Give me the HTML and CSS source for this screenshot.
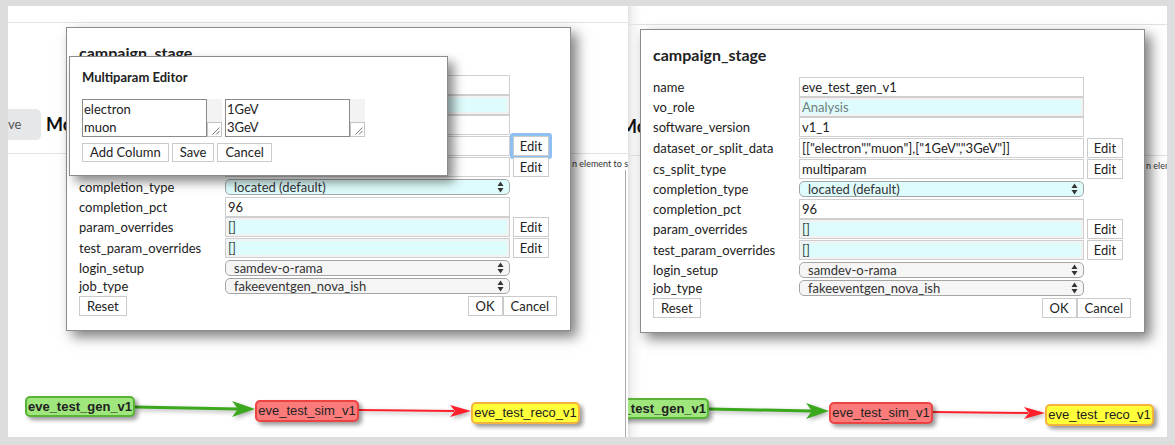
FILE: index.html
```html
<!DOCTYPE html>
<html lang="en">
<head>
<meta charset="utf-8">
<title>campaign_stage editor</title>
<link rel="stylesheet" href="styles.css">
</head>
<body>
<div class="screens">

  <section class="shot shot-left">
    <div class="page">
      <div class="topbar"></div>
      <div class="toolbar">
        <button class="tb-btn">ve</button>
        <h2 class="page-title">Mo</h2>
      </div>
      <div class="hint">n element to s</div>
      <div class="canvas">
        <svg class="edges" width="618" height="267" viewBox="0 0 618 267">
          <line x1="127" y1="237" x2="230" y2="239" stroke="#3ca81e" stroke-width="3"/>
          <path d="M247 239 L224 231 L230 239 L224 247 Z" fill="#3ca81e"/>
          <line x1="351" y1="240" x2="446" y2="241" stroke="#ff1f2a" stroke-width="2"/>
          <path d="M463 241 L442 235 L447 241 L442 247 Z" fill="#ff1f2a"/>
        </svg>
        <div class="node node-gen">eve_test_gen_v1</div>
        <div class="node node-sim">eve_test_sim_v1</div>
        <div class="node node-reco">eve_test_reco_v1</div>
      </div>

      <div class="dialog">
        <h3 class="dialog-title">campaign_stage</h3>
        <div class="form-row r20"><span class="label">name</span><input class="field" type="text" value="eve_test_gen_v1"></div>
        <div class="form-row r20"><span class="label">vo_role</span><input class="field field-ro field-muted" type="text" value="Analysis"></div>
        <div class="form-row r20"><span class="label">software_version</span><input class="field" type="text" value="v1_1"></div>
        <div class="form-row r21"><span class="label">dataset_or_split_data</span><input class="field" type="text" value=""><button class="btn btn-edit is-focused">Edit</button></div>
        <div class="form-row r21"><span class="label">cs_split_type</span><input class="field" type="text" value="multiparam"><button class="btn btn-edit">Edit</button></div>
        <div class="form-row r19"><span class="label">completion_type</span><div class="select select-ro"><span>located (default)</span><svg class="sel-arrow" width="7" height="12" viewBox="0 0 7 12"><path d="M3.5 0.5 L6.5 5 H0.5Z M3.5 11.5 L6.5 7 H0.5Z" fill="#333"/></svg></div></div>
        <div class="form-row r21"><span class="label">completion_pct</span><input class="field" type="text" value="96"></div>
        <div class="form-row r20"><span class="label">param_overrides</span><input class="field field-ro" type="text" value="[]"><button class="btn btn-edit">Edit</button></div>
        <div class="form-row r21"><span class="label">test_param_overrides</span><input class="field field-ro" type="text" value="[]"><button class="btn btn-edit">Edit</button></div>
        <div class="form-row r19"><span class="label">login_setup</span><div class="select"><span>samdev-o-rama</span><svg class="sel-arrow" width="7" height="12" viewBox="0 0 7 12"><path d="M3.5 0.5 L6.5 5 H0.5Z M3.5 11.5 L6.5 7 H0.5Z" fill="#333"/></svg></div></div>
        <div class="form-row r18"><span class="label">job_type</span><div class="select"><span>fakeeventgen_nova_ish</span><svg class="sel-arrow" width="7" height="12" viewBox="0 0 7 12"><path d="M3.5 0.5 L6.5 5 H0.5Z M3.5 11.5 L6.5 7 H0.5Z" fill="#333"/></svg></div></div>
        <div class="form-actions">
          <button class="btn">Reset</button>
          <div class="action-group"><button class="btn">OK</button><button class="btn">Cancel</button></div>
        </div>
      </div>

      <div class="mp">
        <h4 class="mp-title">Multiparam Editor</h4>
        <div class="mp-cols">
          <div class="ta">
            <div class="ta-text">electron<br>muon</div>
            <div class="ta-track"><div class="ta-grip"><svg width="13" height="13" viewBox="0 0 13 13"><path d="M11.5 4.5 L4.5 11.5 M11.5 8 L8 11.5" stroke="#777" stroke-width="1"/></svg></div></div>
          </div>
          <div class="ta">
            <div class="ta-text">1GeV<br>3GeV</div>
            <div class="ta-track"><div class="ta-grip"><svg width="13" height="13" viewBox="0 0 13 13"><path d="M11.5 4.5 L4.5 11.5 M11.5 8 L8 11.5" stroke="#777" stroke-width="1"/></svg></div></div>
          </div>
        </div>
        <div class="mp-actions">
          <button class="btn btn-sm">Add Column</button>
          <button class="btn btn-sm">Save</button>
          <button class="btn btn-sm">Cancel</button>
        </div>
      </div>
    </div>
  </section>

  <section class="shot shot-right">
    <div class="page">
      <div class="topbar"></div>
      <div class="toolbar">
        <button class="tb-btn">ve</button>
        <h2 class="page-title">Mo</h2>
      </div>
      <div class="hint">n element to s</div>
      <div class="canvas">
        <svg class="edges" width="618" height="267" viewBox="0 0 618 267">
          <line x1="127" y1="237" x2="230" y2="239" stroke="#3ca81e" stroke-width="3"/>
          <path d="M247 239 L224 231 L230 239 L224 247 Z" fill="#3ca81e"/>
          <line x1="351" y1="240" x2="446" y2="241" stroke="#ff1f2a" stroke-width="2"/>
          <path d="M463 241 L442 235 L447 241 L442 247 Z" fill="#ff1f2a"/>
        </svg>
        <div class="node node-gen">eve_test_gen_v1</div>
        <div class="node node-sim">eve_test_sim_v1</div>
        <div class="node node-reco">eve_test_reco_v1</div>
      </div>

      <div class="dialog">
        <h3 class="dialog-title">campaign_stage</h3>
        <div class="form-row r20"><span class="label">name</span><input class="field" type="text" value="eve_test_gen_v1"></div>
        <div class="form-row r20"><span class="label">vo_role</span><input class="field field-ro field-muted" type="text" value="Analysis"></div>
        <div class="form-row r20"><span class="label">software_version</span><input class="field" type="text" value="v1_1"></div>
        <div class="form-row r21"><span class="label">dataset_or_split_data</span><input class="field" type="text" value='[["electron","muon"],["1GeV","3GeV"]]'><button class="btn btn-edit">Edit</button></div>
        <div class="form-row r21"><span class="label">cs_split_type</span><input class="field" type="text" value="multiparam"><button class="btn btn-edit">Edit</button></div>
        <div class="form-row r19"><span class="label">completion_type</span><div class="select select-ro"><span>located (default)</span><svg class="sel-arrow" width="7" height="12" viewBox="0 0 7 12"><path d="M3.5 0.5 L6.5 5 H0.5Z M3.5 11.5 L6.5 7 H0.5Z" fill="#333"/></svg></div></div>
        <div class="form-row r21"><span class="label">completion_pct</span><input class="field" type="text" value="96"></div>
        <div class="form-row r20"><span class="label">param_overrides</span><input class="field field-ro" type="text" value="[]"><button class="btn btn-edit">Edit</button></div>
        <div class="form-row r21"><span class="label">test_param_overrides</span><input class="field field-ro" type="text" value="[]"><button class="btn btn-edit">Edit</button></div>
        <div class="form-row r19"><span class="label">login_setup</span><div class="select"><span>samdev-o-rama</span><svg class="sel-arrow" width="7" height="12" viewBox="0 0 7 12"><path d="M3.5 0.5 L6.5 5 H0.5Z M3.5 11.5 L6.5 7 H0.5Z" fill="#333"/></svg></div></div>
        <div class="form-row r18"><span class="label">job_type</span><div class="select"><span>fakeeventgen_nova_ish</span><svg class="sel-arrow" width="7" height="12" viewBox="0 0 7 12"><path d="M3.5 0.5 L6.5 5 H0.5Z M3.5 11.5 L6.5 7 H0.5Z" fill="#333"/></svg></div></div>
        <div class="form-actions">
          <button class="btn">Reset</button>
          <div class="action-group"><button class="btn">OK</button><button class="btn">Cancel</button></div>
        </div>
      </div>
    </div>
  </section>

</div>
</body>
</html>
```

FILE: styles.css
```css
* { box-sizing: border-box; }

html, body { margin: 0; padding: 0; }

body {
  width: 1175px;
  height: 445px;
  overflow: hidden;
  background: #dddddd;
  font-family: Lato, "Open Sans", sans-serif;
  color: #222;
}

.screens {
  display: flex;
  padding: 6px 0 0 8px;
}

.shot {
  position: relative;
  height: 431px;
  overflow: hidden;
  background: #fff;
}

.shot-left { width: 620px; }

.shot-right {
  width: 539px;
  background: linear-gradient(90deg, rgba(0,0,0,0.11), rgba(0,0,0,0.04) 5px, rgba(0,0,0,0) 14px), #fff;
}

.page {
  position: relative;
  width: 640px;
  height: 431px;
}

.shot-right .page { margin: 2px 0 0 -46px; }

.topbar {
  height: 17px;
  border-bottom: 1px solid #e2e2e2;
}

.toolbar {
  display: flex;
  align-items: flex-start;
  height: 131px;
  padding-top: 86px;
  border-bottom: 1px solid #e2e2e2;
}

.tb-btn {
  width: 33px;
  height: 31px;
  padding: 0;
  border: 0;
  border-radius: 0 5px 5px 0;
  background: #e6e7e8;
  color: #555;
  font: 13px/31px Lato, sans-serif;
  text-align: left;
}

.page-title {
  margin: 0 0 0 5px;
  font: bold 18px/31px Lato, sans-serif;
  color: #111;
}

.hint {
  height: 12px;
  margin-top: 4px;
  padding-left: 564px;
  font-size: 9px;
  line-height: 12px;
  white-space: nowrap;
  color: #333;
}

.canvas {
  position: relative;
  width: 618px;
  height: 267px;
  border-right: 1px solid #a8a8a8;
}

.edges {
  position: absolute;
  left: 0;
  top: 0;
  filter: drop-shadow(2px 2px 2px rgba(0,0,0,0.3));
}

.node {
  position: absolute;
  height: 21px;
  border: 2px solid;
  border-radius: 5px;
  font: 13px/17px "Liberation Sans", Arial, sans-serif;
  color: #222;
  text-align: center;
  white-space: nowrap;
  box-shadow: 3px 3px 4px rgba(0,0,0,0.4);
}

.node-gen {
  left: 17px;
  top: 226px;
  width: 110px;
  background: #9fe67c;
  border-color: #58b337;
  font-weight: bold;
}

.node-sim {
  left: 247px;
  top: 230px;
  width: 104px;
  height: 22px;
  line-height: 18px;
  background: #fb7b7b;
  border-color: #ec4343;
}

.node-reco {
  left: 463px;
  top: 232px;
  width: 109px;
  height: 22px;
  line-height: 18px;
  background: #ffff3a;
  border-color: #f4b33c;
}

/* campaign_stage dialog */
.dialog {
  position: absolute;
  left: 58px;
  top: 21px;
  width: 505px;
  height: 304px;
  padding: 15px 13px 0 12px;
  background: #fff;
  border: 1px solid #8c8c8c;
  box-shadow: 6px 6px 12px rgba(0,0,0,0.5);
}

.dialog-title {
  margin: 0 0 12px;
  font: bold 16px/20px Lato, sans-serif;
  color: #222;
}

.form-row {
  display: flex;
  align-items: center;
}

.r18 { height: 18px; }
.r19 { height: 19px; }
.r20 { height: 20px; }
.r21 { height: 21px; }

.label {
  width: 146px;
  font-size: 13px;
  line-height: 16px;
  color: #222;
  white-space: nowrap;
}

.field {
  width: 285px;
  height: 20px;
  margin: 0;
  padding: 0 2px;
  border: 1px solid #cfcfcf;
  border-radius: 0;
  background: #fff;
  font: 13px/18px Lato, sans-serif;
  color: #222;
  outline: none;
}

.field-ro {
  background: #dffcfc;
  box-shadow: inset 0 0 0 2px #f2f2f2;
  color: #444;
}

.field-muted { color: #6f7f80; }

.select {
  align-self: flex-end;
  margin-bottom: 1px;
  width: 285px;
  height: 16px;
  display: flex;
  align-items: center;
  justify-content: space-between;
  padding: 0 5px 0 8px;
  border: 1px solid #a5a5a5;
  border-radius: 5px;
  background: #f5f5f5;
  font-size: 13px;
  line-height: 14px;
  color: #333;
}

.select-ro { background: #dffcfc; }

.sel-arrow { display: block; }

.btn {
  height: 20px;
  margin: 0;
  padding: 0 7px;
  border: 1px solid #cbcbcb;
  border-radius: 0;
  background: #fff;
  font: 13px/18px Lato, sans-serif;
  color: #222;
}

.btn-edit {
  width: 36px;
  margin-left: 3px;
  padding: 0;
}

.btn.is-focused {
  border-radius: 1px;
  box-shadow: 0 0 0 3px #8ec0f4;
}

.form-actions {
  display: flex;
  justify-content: space-between;
  align-items: flex-start;
  height: 21px;
  padding-top: 1px;
}

.action-group { display: flex; }

/* Multiparam editor */
.mp {
  position: absolute;
  left: 61px;
  top: 50px;
  width: 379px;
  height: 120px;
  padding: 12px 12px 0;
  background: #fff;
  border: 1px solid #8c8c8c;
  box-shadow: 6px 6px 10px rgba(0,0,0,0.45);
}

.mp-title {
  margin: 0 0 14px;
  font: bold 13px/16px Lato, sans-serif;
  color: #222;
}

.mp-cols {
  display: flex;
  gap: 3px;
}

.ta {
  display: flex;
  height: 38px;
}

.ta-text {
  width: 125px;
  height: 38px;
  padding: 0 1px;
  border: 1px solid #8a8a8a;
  font-size: 13px;
  line-height: 18px;
  color: #222;
}

.ta-track {
  width: 15px;
  display: flex;
  flex-direction: column;
  justify-content: flex-end;
  background: #f3f3f3;
}

.ta-grip {
  height: 15px;
  border: 1px solid #c5c5c5;
  background: #fff;
}

.ta-grip svg { display: block; }

.mp-actions {
  display: flex;
  gap: 3px;
  margin-top: 6px;
}

.btn-sm { height: 19px; line-height: 17px; }
```
